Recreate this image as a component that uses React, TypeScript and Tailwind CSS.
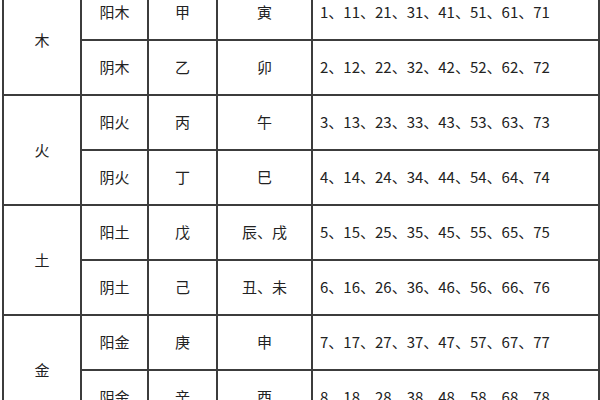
import React from "react";

const groups = [
  { el: "木", rows: [["阳木", "甲", "寅", "1、11、21、31、41、51、61、71"], ["阴木", "乙", "卯", "2、12、22、32、42、52、62、72"]] },
  { el: "火", rows: [["阳火", "丙", "午", "3、13、23、33、43、53、63、73"], ["阴火", "丁", "巳", "4、14、24、34、44、54、64、74"]] },
  { el: "土", rows: [["阳土", "戊", "辰、戌", "5、15、25、35、45、55、65、75"], ["阴土", "己", "丑、未", "6、16、26、36、46、56、66、76"]] },
  { el: "金", rows: [["阳金", "庚", "申", "7、17、27、37、47、57、67、77"], ["阴金", "辛", "酉", "8、18、28、38、48、58、68、78"]] },
];

export default function App() {
  const cell = "border-2 border-[#3c3c3c] text-center align-middle";
  return (
    <div
      className="w-[600px] h-[400px] overflow-hidden bg-white text-[#222] text-[15px]"
      style={{ fontFamily: '"Noto Sans CJK SC", "Liberation Serif", serif' }}
    >
      <table className="ml-[2px] -mt-[16px] table-fixed border-collapse w-[596px]">
        <colgroup>
          <col className="w-[78px]" />
          <col className="w-[67px]" />
          <col className="w-[69px]" />
          <col className="w-[95px]" />
          <col className="w-[287px]" />
        </colgroup>
        <tbody>
          {groups.map((g) =>
            g.rows.map((r, i) => (
              <tr key={g.el + i} className="h-[55px]">
                {i === 0 && (
                  <td rowSpan={2} className={cell}>
                    {g.el}
                  </td>
                )}
                <td className={cell}>{r[0]}</td>
                <td className={cell}>{r[1]}</td>
                <td className={cell}>{r[2]}</td>
                <td className="border-2 border-[#3c3c3c] text-left align-middle pl-[7px]">{r[3]}</td>
              </tr>
            ))
          )}
        </tbody>
      </table>
    </div>
  );
}
